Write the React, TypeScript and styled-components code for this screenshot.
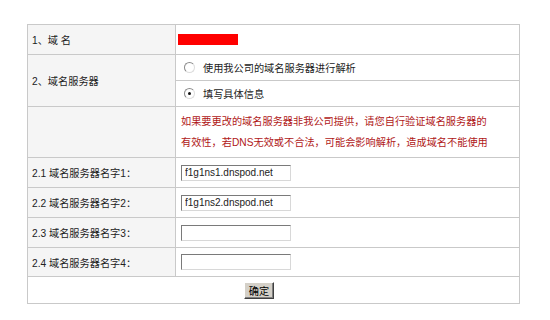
import React from "react";
import styled, { createGlobalStyle } from "styled-components";

const GlobalStyle = createGlobalStyle`
  html, body {
    margin: 0;
    padding: 0;
    background: #ffffff;
  }
  body {
    font-family: "Liberation Sans", "Noto Sans CJK SC", sans-serif;
    font-size: 10.2px;
    color: #222222;
  }
`;

const Page = styled.div`
  padding: 24px 0 0 27px;
`;

const FormGrid = styled.div`
  display: grid;
  grid-template-columns: 147px 343px;
  grid-template-rows: 29px 25px 25px 50px 29px 29px 29px 28px 26px;
  gap: 1px;
  padding: 1px;
  width: max-content;
  background: #c9c9c9;
`;

const LabelCell = styled.div<{ $span?: number }>`
  display: flex;
  align-items: center;
  padding-left: 4px;
  background: #f5f5f5;
  grid-row: ${(p) => (p.$span ? `span ${p.$span}` : "auto")};
  white-space: nowrap;
`;

const ValueCell = styled.div<{ $indent?: number }>`
  display: flex;
  align-items: center;
  padding-left: ${(p) => p.$indent ?? 5}px;
  background: #ffffff;
  white-space: nowrap;
`;

const FooterCell = styled.div`
  grid-column: span 2;
  display: flex;
  align-items: center;
  padding-left: 216px;
  background: #ffffff;
`;

const Redacted = styled.span`
  display: block;
  width: 60px;
  height: 11px;
  background: #ff0000;
`;

const RadioLabel = styled.label`
  display: flex;
  align-items: center;
  gap: 8px;
  cursor: default;
`;

const RadioDot = styled.span<{ $checked?: boolean }>`
  position: relative;
  display: block;
  width: 11px;
  height: 11px;
  box-sizing: border-box;
  border-radius: 50%;
  border: 1px solid #8a8a8a;
  border-right-color: #dcdcdc;
  border-bottom-color: #dcdcdc;
  background: #ffffff;

  &::after {
    content: "";
    display: ${(p) => (p.$checked ? "block" : "none")};
    position: absolute;
    left: 3px;
    top: 3px;
    width: 3px;
    height: 3px;
    border-radius: 50%;
    background: #111111;
  }
`;

const Notice = styled.p`
  margin: 0;
  line-height: 21px;
  color: #b01818;
  white-space: nowrap;
`;

const TextField = styled.input`
  box-sizing: border-box;
  width: 110px;
  height: 16px;
  padding: 0 3px;
  margin: 0;
  font-family: "Liberation Sans", sans-serif;
  font-size: 10px;
  color: #222222;
  background: #ffffff;
  border: 1px solid;
  border-color: #7a7a7a #d8d8d8 #d8d8d8 #7a7a7a;
  outline: none;
`;

const SubmitButton = styled.button`
  box-sizing: border-box;
  width: 30px;
  height: 17px;
  padding: 0;
  font-family: "Noto Sans CJK SC", sans-serif;
  font-size: 10.2px;
  line-height: 13px;
  color: #000000;
  background: #d4d0c8;
  border: 1px solid;
  border-color: #ffffff #404040 #404040 #ffffff;
  box-shadow: inset -1px -1px 0 #808080;
`;

const servers = [
  { label: "2.1 域名服务器名字1：", value: "f1g1ns1.dnspod.net" },
  { label: "2.2 域名服务器名字2：", value: "f1g1ns2.dnspod.net" },
  { label: "2.3 域名服务器名字3：", value: "" },
  { label: "2.4 域名服务器名字4：", value: "" },
];

export default function App() {
  return (
    <Page>
      <GlobalStyle />
      <FormGrid>
        <LabelCell>1、域 名</LabelCell>
        <ValueCell $indent={2}>
          <Redacted />
        </ValueCell>

        <LabelCell $span={2}>2、域名服务器</LabelCell>
        <ValueCell $indent={8}>
          <RadioLabel>
            <RadioDot />
            使用我公司的域名服务器进行解析
          </RadioLabel>
        </ValueCell>
        <ValueCell $indent={8}>
          <RadioLabel>
            <RadioDot $checked />
            填写具体信息
          </RadioLabel>
        </ValueCell>

        <LabelCell />
        <ValueCell>
          <Notice>
            如果要更改的域名服务器非我公司提供，请您自行验证域名服务器的
            <br />
            有效性，若DNS无效或不合法，可能会影响解析，造成域名不能使用
          </Notice>
        </ValueCell>

        {servers.map((s) => (
          <React.Fragment key={s.label}>
            <LabelCell>{s.label}</LabelCell>
            <ValueCell>
              <TextField defaultValue={s.value} />
            </ValueCell>
          </React.Fragment>
        ))}

        <FooterCell>
          <SubmitButton type="button">确定</SubmitButton>
        </FooterCell>
      </FormGrid>
    </Page>
  );
}
